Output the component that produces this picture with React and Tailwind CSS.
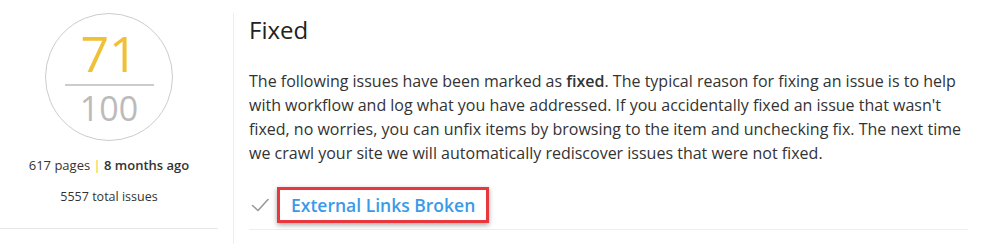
import React from "react";

const CheckIcon = () => (
  <svg width="18" height="14" viewBox="0 0 18 14" fill="none" className="shrink-0">
    <polyline
      points="1.5,7.5 7,12.5 17,1.5"
      stroke="#999999"
      strokeWidth="1.6"
      strokeLinecap="round"
      strokeLinejoin="round"
    />
  </svg>
);

const App = () => {
  return (
    <div className="w-[992px] h-[244px] bg-white flex font-['Open_Sans',sans-serif] overflow-hidden">
      {/* Score column */}
      <div className="w-[218px] shrink-0 pt-[13px]">
        <div className="mx-auto w-[128px] h-[128px] rounded-full border border-[#cccccc] flex flex-col items-center pt-[14px]">
          <span className="text-[50px] leading-[50px] text-[#f0c036]">71</span>
          <div className="w-[89px] h-[2px] bg-[#cccccc] mt-[6px]"></div>
          <span className="text-[34px] leading-[34px] text-[#bbbbbb] mt-[5px]">100</span>
        </div>
        <p className="mt-[15px] text-center text-[13px] leading-[18px] text-[#333]">
          617 pages <span className="text-[#f0c036]">|</span>{" "}
          <span className="font-semibold">8 months ago</span>
        </p>
        <p className="mt-[14px] text-center text-[12.5px] leading-[18px] text-[#333] pb-[22px] border-b border-[#e8e8e8]">
          5557 total issues
        </p>
      </div>

      {/* Fixed list */}
      <div className="flex-1 ml-[15px] mt-[13px] border-l border-[#eeeeee] pl-[15px] pr-6 pt-[2px]">
        <h2 className="text-[24px] leading-[30px] text-[#222]">Fixed</h2>
        <p className="mt-[24px] text-[16px] leading-[24px] text-[#333]">
          The following issues have been marked as <strong className="font-semibold">fixed</strong>. The
          typical reason for fixing an issue is to help with workflow and log what you have addressed. If
          you accidentally fixed an issue that wasn't fixed, no worries, you can unfix items by browsing to
          the item and unchecking fix. The next time we crawl your site we will automatically rediscover
          issues that were not fixed.
        </p>
        <div className="mt-[22px] pb-[6px] border-b border-[#eeeeee] flex items-center gap-[8px] pl-[2px]">
          <CheckIcon />
          <a
            href="#"
            className="border-[3px] border-[#e8383d] px-[11px] text-[17.5px] leading-[30px] font-semibold text-[#3a9ae8] shadow-[0_2px_5px_rgba(0,0,0,0.35)]"
          >
            External Links Broken
          </a>
        </div>
      </div>
    </div>
  );
};

export default App;
